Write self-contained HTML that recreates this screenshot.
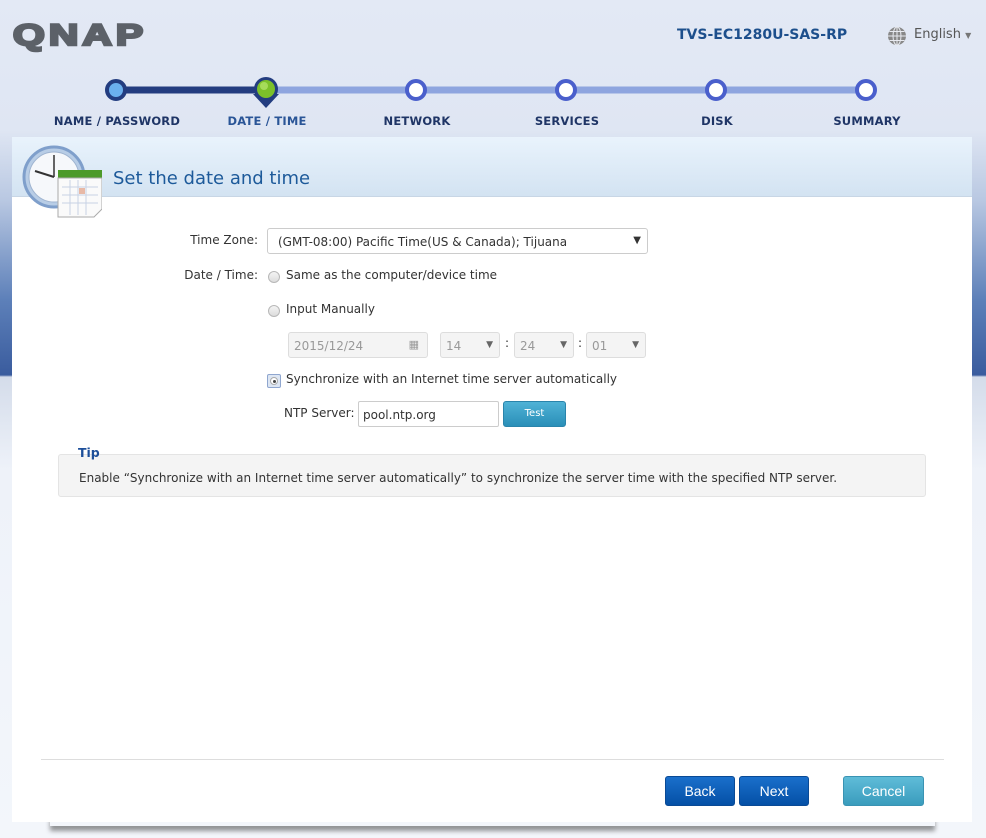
<!DOCTYPE html>
<html><head><meta charset="utf-8"><style>
*{margin:0;padding:0;box-sizing:border-box}
body{width:986px;height:838px;overflow:hidden;position:relative;font-family:"DejaVu Sans","Liberation Sans",sans-serif;font-size:12px;color:#333;
background:linear-gradient(to bottom,#e3e9f5 0px,#dfe6f3 130px,#b9c8e2 200px,#5d80b9 300px,#3a5c9e 375px,#d4dcea 377px,#eef2f9 470px,#f3f6fb 838px);}
.abs{position:absolute}
.step{position:absolute;top:114px;font-weight:bold;font-size:11.5px;color:#1f3566;transform:translateX(-50%);white-space:nowrap;letter-spacing:.2px}
.panel{position:absolute;left:12px;top:137px;width:960px;height:685px;background:#fff}
.shadow{position:absolute;left:50px;top:814px;width:885px;height:12px;box-shadow:0 5px 5px rgba(0,0,0,.4)}
.hdr{position:absolute;left:0;top:0;width:960px;height:60px;background:linear-gradient(#e9f3fc,#d3e3f2);border-bottom:1px solid #c8d6e5}
.lbl{position:absolute;text-align:right;width:120px;font-size:12px}
.radio{position:absolute;width:12px;height:12px;border-radius:50%;border:1px solid #b8b8b8;background:linear-gradient(#f4f4f4,#dcdcdc)}
.sel{position:absolute;height:26px;border:1px solid #ddd;border-radius:3px;background:#f4f4f4;color:#999;padding:6px 5px;font-size:12px}
.btn{position:absolute;top:639px;height:30px;border-radius:3px;color:#fff;text-align:center;line-height:29px;font-family:"Liberation Sans Narrow","Liberation Sans",sans-serif;font-size:14px}
</style></head><body>
<div class="abs" style="left:13px;top:21px;font-family:'Liberation Sans',sans-serif;font-weight:bold;font-size:30px;color:#5c6168;-webkit-text-stroke:2.5px #5c6168;letter-spacing:3px;transform:scaleX(1.36);transform-origin:left;line-height:30px">QNAP</div>
<div class="abs" style="left:677px;top:27px;font-weight:bold;font-size:14px;color:#1d4f8c">TVS-EC1280U-SAS-RP</div>
<svg class="abs" style="left:887px;top:26px" width="20" height="20" viewBox="0 0 20 20"><circle cx="10" cy="10" r="9" fill="#888"/><g stroke="#e8eaf0" stroke-width="1" fill="none"><ellipse cx="10" cy="10" rx="4" ry="9"/><line x1="10" y1="1" x2="10" y2="19"/><line x1="1" y1="10" x2="19" y2="10"/><line x1="2.5" y1="5.5" x2="17.5" y2="5.5"/><line x1="2.5" y1="14.5" x2="17.5" y2="14.5"/></g></svg>
<div class="abs" style="left:914px;top:27px;font-size:13px;color:#555">English <span style="font-size:8px;color:#777">▼</span></div>
<svg class="abs" style="left:0;top:70px" width="986" height="44">
<line x1="116" y1="20" x2="266" y2="20" stroke="#233d80" stroke-width="7"/>
<line x1="266" y1="20" x2="866" y2="20" stroke="#8ea5df" stroke-width="7"/>
<circle cx="116" cy="20" r="9" fill="#6bb0ee" stroke="#233d80" stroke-width="4"/>
<path d="M253 24 L266 38 L279 24 Z" fill="#233d80"/>
<circle cx="266" cy="19" r="12" fill="#233d80"/>
<circle cx="266" cy="19" r="9" fill="#7cc12a"/>
<circle cx="264" cy="16" r="4" fill="#a6dc5a"/>
<g fill="#fff" stroke="#4a5fcc" stroke-width="4"><circle cx="416" cy="20" r="9"/><circle cx="566" cy="20" r="9"/><circle cx="716" cy="20" r="9"/><circle cx="866" cy="20" r="9"/></g>
</svg>
<div class="step" style="left:117px">NAME / PASSWORD</div>
<div class="step" style="left:267px;color:#2a5597">DATE / TIME</div>
<div class="step" style="left:417px">NETWORK</div>
<div class="step" style="left:567px">SERVICES</div>
<div class="step" style="left:717px">DISK</div>
<div class="step" style="left:867px">SUMMARY</div>
<div class="shadow"></div>
<div class="panel">
<div class="hdr"></div>
<div class="abs" style="left:101px;top:31px;font-size:18px;color:#1d5a9a">Set the date and time</div>
<svg class="abs" style="left:10px;top:8px" width="80" height="80" viewBox="0 0 80 80">
<circle cx="32" cy="32" r="30" fill="#b8cde6" stroke="#7f9fcb" stroke-width="3"/>
<circle cx="32" cy="32" r="25" fill="#f6f8fb" stroke="#9fb4d0"/>
<line x1="32" y1="32" x2="32" y2="10" stroke="#333" stroke-width="1.5"/>
<line x1="32" y1="32" x2="13" y2="26" stroke="#333" stroke-width="2"/>
<rect x="36" y="25" width="44" height="8" fill="#4c9a2a"/>
<path d="M36 33 H80 V64 L72 72 H36 Z" fill="#fafafa" stroke="#aaa"/>
<g stroke="#c8d2e4"><line x1="40" y1="42" x2="76" y2="42"/><line x1="40" y1="50" x2="76" y2="50"/><line x1="40" y1="58" x2="76" y2="58"/><line x1="48" y1="35" x2="48" y2="70"/><line x1="56" y1="35" x2="56" y2="70"/><line x1="64" y1="35" x2="64" y2="70"/></g>
<rect x="57" y="43" width="6" height="6" fill="#e8b9a6"/>
</svg>
<div class="lbl" style="left:126px;top:96px">Time Zone:</div>
<div class="abs" style="left:255px;top:91px;width:381px;height:26px;border:1px solid #ccc;border-radius:3px;padding:6px 10px;font-size:12px">(GMT-08:00) Pacific Time(US &amp; Canada); Tijuana<span style="position:absolute;right:6px;top:6px;font-size:10px">▼</span></div>
<div class="lbl" style="left:126px;top:131px">Date / Time:</div>
<div class="radio" style="left:256px;top:134px"></div>
<div class="abs" style="left:274px;top:131px">Same as the computer/device time</div>
<div class="radio" style="left:256px;top:168px"></div>
<div class="abs" style="left:274px;top:165px">Input Manually</div>
<div class="sel" style="left:276px;top:195px;width:140px">2015/12/24<span style="position:absolute;right:8px;top:5px;font-size:11px">▦</span></div>
<div class="sel" style="left:428px;top:195px;width:60px">14<span style="position:absolute;right:6px;top:7px;font-size:9px;color:#666">▼</span></div>
<div class="abs" style="left:493px;top:199px">:</div>
<div class="sel" style="left:502px;top:195px;width:60px">24<span style="position:absolute;right:6px;top:7px;font-size:9px;color:#666">▼</span></div>
<div class="abs" style="left:566px;top:199px">:</div>
<div class="sel" style="left:574px;top:195px;width:60px">01<span style="position:absolute;right:6px;top:7px;font-size:9px;color:#666">▼</span></div>
<div class="abs" style="left:255px;top:237px;width:14px;height:14px;border:1px solid #8fa6cf;border-radius:2px;background:#dde6f3"><div style="position:absolute;left:2px;top:2px;width:8px;height:8px;border-radius:50%;background:#fff;border:1px solid #aaa"><div style="position:absolute;left:1.5px;top:1.5px;width:3px;height:3px;border-radius:50%;background:#444"></div></div></div>
<div class="abs" style="left:274px;top:235px">Synchronize with an Internet time server automatically</div>
<div class="abs" style="left:272px;top:269px">NTP Server:</div>
<div class="abs" style="left:346px;top:264px;width:141px;height:26px;border:1px solid #ccc;border-radius:2px;padding:6px 4px;font-size:12px">pool.ntp.org</div>
<div class="abs" style="left:491px;top:264px;width:63px;height:26px;border-radius:3px;background:linear-gradient(#4fb2d6,#2a8fb8);border:1px solid #2a84ab;color:#fff;font-size:10px;text-align:center;line-height:24px">Test</div>
<div class="abs" style="left:46px;top:317px;width:868px;height:43px;background:#f4f4f4;border:1px solid #e4e4e4;border-radius:3px"></div>
<div class="abs" style="left:66px;top:308px;font-weight:bold;color:#1d4f9a;font-size:12.5px">Tip</div>
<div class="abs" style="left:67px;top:334px">Enable “Synchronize with an Internet time server automatically” to synchronize the server time with the specified NTP server.</div>
<div class="abs" style="left:29px;top:622px;width:903px;height:1px;background:#ddd"></div>
<div class="btn" style="left:653px;width:70px;background:linear-gradient(#1a6fcb,#0450a6);border:1px solid #0a4a95">Back</div>
<div class="btn" style="left:727px;width:70px;background:linear-gradient(#1a6fcb,#0450a6);border:1px solid #0a4a95">Next</div>
<div class="btn" style="left:831px;width:81px;background:linear-gradient(#5fbcd8,#3a9cbd);border:1px solid #3a93b3">Cancel</div>
</div>
</body></html>
